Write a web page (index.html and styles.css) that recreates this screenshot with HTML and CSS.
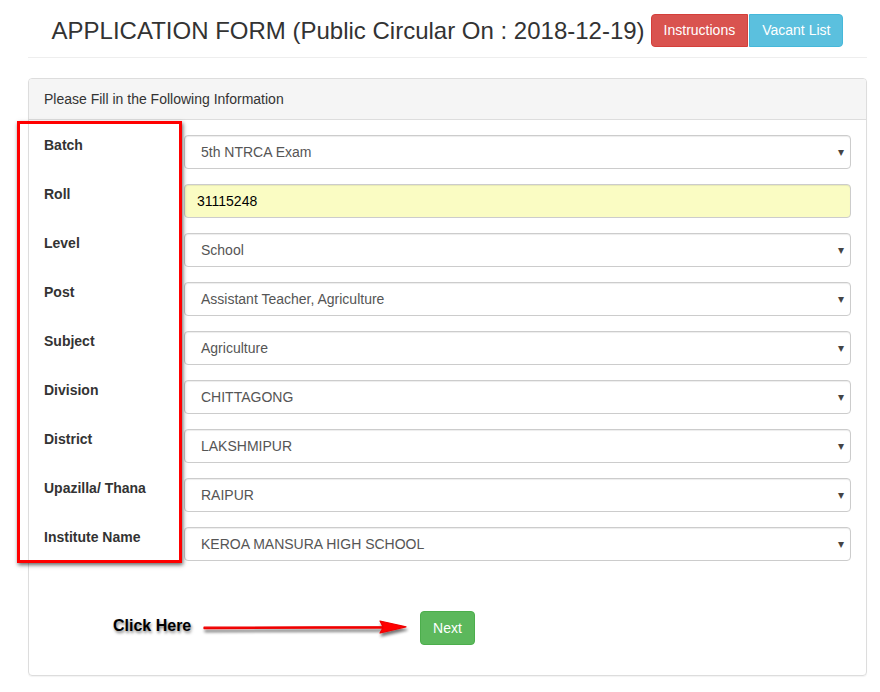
FILE: index.html
```html
<!DOCTYPE html>
<html>
<head>
<meta charset="utf-8">
<link rel="stylesheet" href="styles.css">
</head>
<body>
<div class="page">
  <div class="header">
    <h2 class="title">APPLICATION FORM (Public Circular On : 2018-12-19)</h2>
    <span class="btn btn-red">Instructions</span><span class="btn btn-blue">Vacant List</span>
  </div>
  <div class="rule"></div>
  <div class="panel">
    <div class="panel-heading">Please Fill in the Following Information</div>
    <div class="panel-body">
      <div class="row"><div class="label">Batch</div><div class="select"><span>5th NTRCA Exam</span><span class="caret">▾</span></div></div>
      <div class="row"><div class="label">Roll</div><div class="input">31115248</div></div>
      <div class="row"><div class="label">Level</div><div class="select"><span>School</span><span class="caret">▾</span></div></div>
      <div class="row"><div class="label">Post</div><div class="select"><span>Assistant Teacher, Agriculture</span><span class="caret">▾</span></div></div>
      <div class="row"><div class="label">Subject</div><div class="select"><span>Agriculture</span><span class="caret">▾</span></div></div>
      <div class="row"><div class="label">Division</div><div class="select"><span>CHITTAGONG</span><span class="caret">▾</span></div></div>
      <div class="row"><div class="label">District</div><div class="select"><span>LAKSHMIPUR</span><span class="caret">▾</span></div></div>
      <div class="row"><div class="label">Upazilla/ Thana</div><div class="select"><span>RAIPUR</span><span class="caret">▾</span></div></div>
      <div class="row"><div class="label">Institute Name</div><div class="select"><span>KEROA MANSURA HIGH SCHOOL</span><span class="caret">▾</span></div></div>
      <div class="actions"><span class="btn btn-green">Next</span></div>
    </div>
  </div>
  <div class="highlight"></div>
  <div class="click-here">Click Here</div>
  <svg class="arrow" width="220" height="30" viewBox="0 0 220 30">
    <defs>
      <filter id="sh" x="-10%" y="-50%" width="130%" height="250%">
        <feGaussianBlur in="SourceAlpha" stdDeviation="1.6"/>
        <feOffset dx="1" dy="3" result="b"/>
        <feComponentTransfer><feFuncA type="linear" slope="0.55"/></feComponentTransfer>
        <feMerge><feMergeNode/><feMergeNode in="SourceGraphic"/></feMerge>
      </filter>
    </defs>
    <g filter="url(#sh)">
      <path d="M4 12.2 L183 11.6 L180 6 L206 11.8 L180 18 L183 12.9 L4 13.6 Z" fill="#f00" stroke="#e00" stroke-width="1.2" stroke-linejoin="round"/>
    </g>
  </svg>
</div>
</body>
</html>
```
FILE: styles.css
```css
* { box-sizing: border-box; }
html, body { margin: 0; padding: 0; background: #fff; }
body { font-family: "Liberation Sans", Arial, sans-serif; font-size: 14px; color: #333; }
.page { position: relative; width: 880px; height: 692px; padding: 14px 13px 0 28px; }
.header { display: flex; align-items: center; justify-content: center; height: 33px; }
.title { margin: 0 6px 0 0; font-weight: normal; font-size: 24px; color: #333; line-height: 33px; }
.btn { display: inline-block; height: 33px; padding: 0 12px; color: #fff; border-radius: 4px; font-size: 14px; border: 1px solid transparent; line-height: 31px; }
.btn-red { background: #d9534f; border-color: #d43f3a; border-top-right-radius: 0; border-bottom-right-radius: 0; }
.btn-blue { background: #5bc0de; border-color: #46b8da; margin-left: 1px; border-top-left-radius: 0; border-bottom-left-radius: 0; }
.btn-green { background: #5cb85c; border-color: #4cae4c; height: 34px; line-height: 32px; }
.rule { height: 1px; background: #eee; margin-top: 10px; }
.panel { margin-top: 20px; border: 1px solid #ddd; border-radius: 4px; height: 598px; box-shadow: 0 1px 1px rgba(0,0,0,0.05); }
.panel-heading { height: 41px; background: #f5f5f5; border-bottom: 1px solid #ddd; padding: 0 15px; line-height: 40px; color: #333; border-radius: 3px 3px 0 0; }
.panel-body { padding: 15px 15px 0 15px; }
.row { display: flex; height: 34px; margin-bottom: 15px; }
.label { width: 140px; font-weight: bold; line-height: 20px; color: #333; padding-top: 0; }
.select, .input { flex: 1; height: 34px; border: 1px solid #ccc; border-radius: 4px; display: flex; align-items: center; color: #555; box-shadow: inset 0 1px 1px rgba(0,0,0,0.075); }
.select { padding: 0 6px 0 16px; }
.select .caret { margin-left: auto; font-size: 12px; color: #444; }
.input { background: #fafcc3; padding-left: 12px; color: #000; border-color: #ccc; }
.actions { display: flex; justify-content: center; padding-top: 35px; }
.highlight { position: absolute; left: 17px; top: 121px; width: 165px; height: 442px; border: 3px solid #f00; box-shadow: 1px 2px 4px rgba(0,0,0,0.6); }
.click-here { position: absolute; left: 113px; top: 617px; font-weight: bold; font-size: 16px; color: #000; text-shadow: 1px 2px 3px rgba(0,0,0,0.5); }
.arrow { position: absolute; left: 200px; top: 615px; }
```
